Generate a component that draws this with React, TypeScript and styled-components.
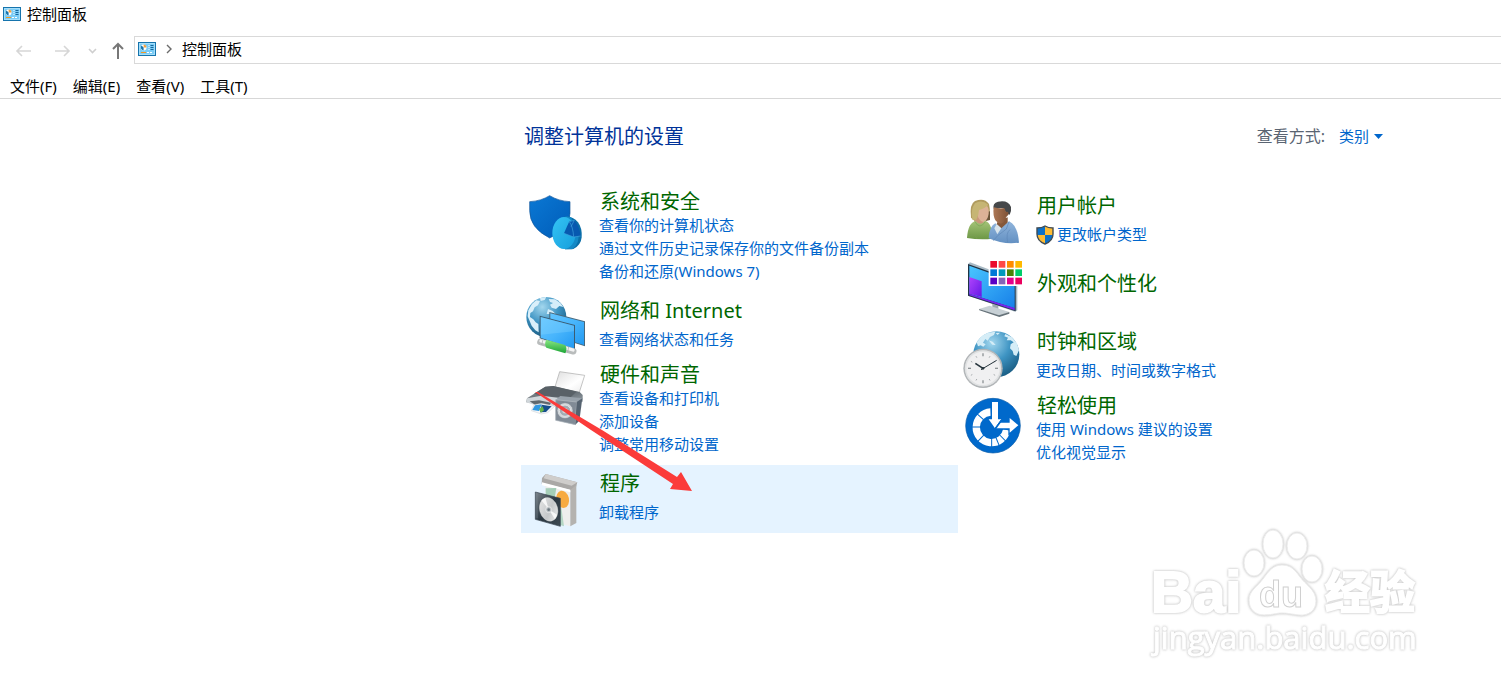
import React from "react";
import styled, { createGlobalStyle } from "styled-components";

const GlobalStyle = createGlobalStyle`
  * { box-sizing: border-box; }
  body {
    margin: 0;
    background: #fff;
    color: #000;
    font-family: "Noto Sans", "Noto Sans CJK SC", sans-serif;
    font-size: 15px;
  }
  button, select { font: inherit; color: inherit; }
`;

const Page = styled.div`
  position: relative;
  min-height: 100vh;
  overflow: hidden;
`;

const TitleBar = styled.header`
  display: flex;
  align-items: center;
  gap: 6px;
  height: 28px;
  padding-left: 3px;
  line-height: 22px;
`;

const NavBar = styled.nav`
  display: flex;
  align-items: center;
  height: 44px;
  padding-left: 14px;
`;

const NavButton = styled.button<{ $width: number }>`
  display: flex;
  align-items: center;
  width: ${(p) => p.$width}px;
  height: 28px;
  padding: 0;
  border: 0;
  background: none;
`;

const AddressBar = styled.div`
  display: flex;
  flex: 1;
  align-items: center;
  gap: 10px;
  height: 28px;
  padding: 0 0 2px 3px;
  border: 1px solid #d9d9d9;
  border-right: 0;
`;

const Crumb = styled.button`
  padding: 0;
  border: 0;
  background: none;
  line-height: 22px;
`;

const MenuBar = styled.div`
  display: flex;
  align-items: center;
  height: 27px;
  padding: 2px 2px 0;
  border-bottom: 1px solid #d7d7d7;
`;

const MenuButton = styled.button`
  padding: 0 8px;
  border: 0;
  background: none;
  line-height: 22px;
`;

const Main = styled.main`
  padding: 22px 106px 0 521px;
`;

const Heading = styled.div`
  display: flex;
  align-items: center;
  justify-content: space-between;
  height: 30px;
  margin-bottom: 36px;
  padding: 0 12px 0 3px;
`;

const PageTitle = styled.h1`
  margin: 0;
  padding-top: 2px;
  color: #003399;
  font-size: 20px;
  font-weight: 400;
  line-height: 28px;
`;

const ViewBy = styled.div`
  display: flex;
  align-items: center;
  gap: 14px;
  color: #5a6472;
`;

const ViewLabel = styled.label`
  font-size: 16px;
  line-height: 24px;
`;

const SelectWrap = styled.div`
  display: grid;
  align-items: center;
  color: #0066cc;
  > * { grid-area: 1 / 1; }
  > svg { justify-self: end; pointer-events: none; }
`;

const Select = styled.select`
  appearance: none;
  width: 44px;
  height: 24px;
  padding: 0;
  border: 0;
  background: none;
`;

const Columns = styled.div`
  display: grid;
  grid-template-columns: 1fr 1fr;
  align-items: start;
`;

const Category = styled.section<{ $active?: boolean }>`
  display: grid;
  grid-template-columns: 64px 1fr;
  column-gap: 12px;
  min-height: 68px;
  padding-left: 2px;
  background: ${(p) => (p.$active ? "#e5f3ff" : "transparent")};
`;

const IconBox = styled.div`
  height: 66px;
  padding-top: 2px;
  > svg { display: block; }
`;

type Density = "empty" | "single" | "list";
const topPad = { empty: 16, single: 6, list: 2 };

const Texts = styled.div<{ $density: Density }>`
  display: flex;
  flex-direction: column;
  align-items: flex-start;
  padding-top: ${(p) => topPad[p.$density]}px;
  padding-bottom: ${(p) => (p.$density === "list" ? 9 : 0)}px;
  gap: ${(p) => (p.$density === "single" ? 5 : 0)}px;
`;

const CategoryLink = styled.a`
  padding-left: 1px;
  color: #006600;
  font-size: 20px;
  line-height: 25px;
  text-decoration: none;
`;

const TaskLink = styled.a`
  display: flex;
  align-items: center;
  gap: 3px;
  color: #0066cc;
  line-height: 23px;
  text-decoration: none;
`;

const Arrow = styled.svg`
  position: absolute;
  left: 530px;
  top: 385px;
  pointer-events: none;
`;

const Watermark = styled.svg`
  position: absolute;
  right: 61px;
  top: 520px;
  pointer-events: none;
  filter: drop-shadow(0 0 1px #c8c8c8) drop-shadow(0 0 1px #e4e4e4);
`;

const PanelIcon = () => (
  <svg width="18" height="14" viewBox="0 0 18 14" aria-hidden="true">
    <rect x="0.5" y="0.5" width="17" height="13" fill="#7accf6" stroke="#1674ad" />
    <rect x="1.5" y="1.5" width="15" height="11" fill="none" stroke="#a4defa" />
    <circle cx="5.6" cy="5.5" r="2.9" fill="#fff" />
    <path d="M5.6 5.5V2.6A2.9 2.9 0 0 1 8.5 5.5Z" fill="#f0a040" />
    <path d="M5.6 5.5L3.5 3.4A3 3 0 0 0 5.6 8.4Z" fill="#1674ad" />
    <path d="M10.5 3.5h1M10.5 5.5h1M10.5 7.5h1" stroke="#fff" />
    <path d="M12.5 3.5h3M12.5 5.5h3M12.5 7.5h3" stroke="#17679c" />
    <path d="M3 10.5h5" stroke="#f39a22" />
    <path d="M9 10.5h2M12 10.5h2" stroke="#fff" />
  </svg>
);

const SecurityIcon = () => (
  <svg width="64" height="64" viewBox="24 237 192 192" aria-hidden="true">
    <defs>
      <linearGradient id="sec-a" x1="0" y1="0" x2="1" y2="1">
        <stop offset="0" stopColor="#0a78d4" /><stop offset="1" stopColor="#005cb8" />
      </linearGradient>
      <linearGradient id="sec-b" x1="0" y1="0" x2="1" y2="1">
        <stop offset="0" stopColor="#35c3f5" /><stop offset="1" stopColor="#159fdc" />
      </linearGradient>
    </defs>
    <path d="M44 275Q78 273 104 257Q130 273 165 275V310Q165 358 104 384Q44 354 44 302Z" fill="url(#sec-a)" stroke="#16579a" strokeWidth="2" />
    <path d="M148 320Q174 318 189 337Q202 354 200 382Q198 406 175 417L150 418Z" fill="#0b6fa8" />
    <path d="M150 320Q160 318 168 322L190 366Q196 398 172 418L150 418Z" fill="#1489c6" />
    <ellipse cx="147" cy="369" rx="35" ry="48" fill="url(#sec-b)" />
    <path d="M147 370L163 334L178 331Q192 346 197 378L176 381Z" fill="#0759b0" />
    <path d="M163 335Q174 350 176 381M147 370L176 381L197 378M163 335L178 331L168 350" fill="none" stroke="#3ea1dd" strokeWidth="2" />
  </svg>
);

const Globe = ({ id, cx, cy, r }: { id: string; cx: number; cy: number; r: number }) => (
  <>
    <defs>
      <radialGradient id={id} cx="0.4" cy="0.25" r="0.8">
        <stop offset="0" stopColor="#a3d7ee" />
        <stop offset="0.5" stopColor="#3e94c3" />
        <stop offset="1" stopColor="#17597f" />
      </radialGradient>
    </defs>
    <circle cx={cx} cy={cy} r={r} fill={`url(#${id})`} />
  </>
);

const NetworkIcon = () => (
  <svg width="64" height="64" viewBox="24 27 192 192" aria-hidden="true">
    <defs>
      <linearGradient id="net-s" x1="0" y1="0" x2="1" y2="1">
        <stop offset="0" stopColor="#62c5ff" /><stop offset="0.5" stopColor="#48b5fc" /><stop offset="1" stopColor="#2299f2" />
      </linearGradient>
      <linearGradient id="net-g" x1="0" y1="0" x2="0" y2="1">
        <stop offset="0" stopColor="#8be783" /><stop offset="1" stopColor="#1ba536" />
      </linearGradient>
    </defs>
    <Globe id="net-globe" cx={94} cy={96} r={60} />
    <path d="M40 76L51 57L64 46L75 48L69 61L59 67L54 79L46 84L45 96L55 103L62 112L70 117L71 142L61 136L50 122L38 94Z" fill="#d9effa" />
    <path d="M75 39L94 36L89 45L77 48ZM101 42L120 43L136 54L145 66L133 63L123 72L110 68L105 59L114 54L105 51ZM99 72L113 78L122 87L95 87Z" fill="#d4edf9" />
    <path d="M103 81L210 109V184L103 150Z" fill="#48687c" />
    <path d="M106 85L207 111V180L106 149Z" fill="url(#net-s)" />
    <path d="M74 92L180 120V195L74 160Z" fill="#3b5c73" />
    <path d="M77 96L177 122V191L77 158Z" fill="url(#net-s)" />
    <path d="M77 96L177 122V139L77 149Z" fill="#9cdeff" opacity=".25" />
    <path d="M76 171L175 199" stroke="#b9bcbc" strokeWidth="19" strokeLinecap="round" />
    <path d="M78 168L174 195" stroke="#f3f3f3" strokeWidth="10" strokeLinecap="round" />
    <path d="M94 164L150 180Q158 188 151 205L94 188Q87 176 94 164Z" fill="url(#net-g)" />
    <path d="M161 185L158 202M84 164L80 180" stroke="#a2a7a7" strokeWidth="2" />
  </svg>
);

const PrinterIcon = () => (
  <svg width="64" height="64" viewBox="24 231 192 192" aria-hidden="true">
    <defs>
      <linearGradient id="prn-a" x1="0" y1="0" x2="1" y2="1">
        <stop offset="0" stopColor="#989da1" /><stop offset="0.55" stopColor="#5d666c" /><stop offset="1" stopColor="#99a2aa" />
      </linearGradient>
      <linearGradient id="prn-b" x1="0" y1="0" x2="1" y2="1">
        <stop offset="0" stopColor="#dedede" /><stop offset="0.6" stopColor="#fff" /><stop offset="1" stopColor="#ececec" />
      </linearGradient>
    </defs>
    <path d="M134 260L209 271L193 322L119 309Z" fill="url(#prn-b)" stroke="#a8a8a8" strokeWidth="2" />
    <path d="M91 305L115 303L194 321L203 330V350L91 354L34 352L36 340Z" fill="url(#prn-a)" />
    <path d="M91 305L115 303L184 320L167 337L85 333L57 326Z" fill="#596167" />
    <path d="M36 340L79 332L161 342L128 354L101 374L34 352Z" fill="#d0d6da" />
    <path d="M44 349L72 346L108 353L100 367L83 369L62 361Z" fill="#5f686e" />
    <path d="M57 359L79 355L120 363L98 383L79 387L49 377Z" fill="#f4f6f8" stroke="#aeb4b9" strokeWidth="1" />
    <path d="M60 361L80 358L72 378L52 375Z" fill="#3198e1" />
    <path d="M80 359L110 364L93 381L75 382Z" fill="#164f8c" />
    <path d="M72 373L83 364L87 376L78 383Z" fill="#67b547" />
    <path d="M122 344L136 333L202 340L194 350L181 419L122 406Z" fill="#98a2ab" />
    <path d="M122 344L185 351L181 419L122 406Z" fill="#818b96" stroke="#b5bcc2" strokeWidth="2" />
    <path d="M185 351L202 340L193 407L181 419Z" fill="#566370" />
    <circle cx="150" cy="377" r="24" fill="#d0d5d9" stroke="#77818b" strokeWidth="2" />
    <circle cx="150" cy="377" r="17" fill="#a3acb4" stroke="#e2e4e6" strokeWidth="3" />
    <circle cx="150" cy="377" r="8" fill="#d2d5d7" />
  </svg>
);

const ProgramsIcon = () => (
  <svg width="64" height="64" viewBox="24 111 192 192" aria-hidden="true">
    <defs>
      <linearGradient id="prg-a" x1="0" y1="0" x2="1" y2="1">
        <stop offset="0" stopColor="#e9e9e9" /><stop offset="0.55" stopColor="#c4c7c9" /><stop offset="1" stopColor="#f2f2f2" />
      </linearGradient>
      <linearGradient id="prg-b" x1="0" y1="0" x2="1" y2="1">
        <stop offset="0" stopColor="#7d858c" /><stop offset="0.5" stopColor="#2a3640" /><stop offset="1" stopColor="#3f4b54" />
      </linearGradient>
    </defs>
    <path d="M81 144L92 132L187 157L183 171L166 182L80 161Z" fill="#aaa8a6" />
    <path d="M92 132L187 157L170 167L86 145Z" fill="#cfcdcb" />
    <path d="M91 161L166 180V289L91 270Z" fill="#eeeeed" />
    <path d="M166 180L184 165V279L166 289Z" fill="#b4b2af" />
    <path d="M81 157L166 179V187L81 166Z" fill="#fff" />
    <path d="M92 175L124 174L119 205L92 198Z" fill="#a5ceb8" />
    <path d="M133 190L147 289L91 270Z" fill="#b4d6c4" />
    <ellipse cx="143" cy="208" rx="19" ry="26" transform="rotate(-12 143 208)" fill="#f7aa40" />
    <path d="M61 186L136 205V289L61 268Z" fill="url(#prg-b)" stroke="#36434e" strokeWidth="2" />
    <ellipse cx="101" cy="238" rx="27" ry="36" transform="rotate(-15 101 238)" fill="url(#prg-a)" stroke="#dadddf" />
    <path d="M101 238L79 211L91 203ZM101 238L126 254L120 268Z" fill="#fff" opacity=".8" />
    <circle cx="101" cy="239" r="9" fill="#b8bec2" stroke="#f4f4f4" strokeWidth="2" />
    <circle cx="101" cy="239" r="4" fill="#6b777f" />
    <path d="M66 191V265" stroke="#788790" strokeWidth="2" />
  </svg>
);

const UsersIcon = () => (
  <svg width="64" height="64" viewBox="15 27 192 192" aria-hidden="true">
    <defs>
      <linearGradient id="usr-g" x1="0" y1="0" x2="0" y2="1">
        <stop offset="0" stopColor="#a6c579" /><stop offset="1" stopColor="#6c9744" />
      </linearGradient>
      <linearGradient id="usr-b" x1="0" y1="0" x2="0" y2="1">
        <stop offset="0" stopColor="#91b5dc" /><stop offset="1" stopColor="#6390c2" />
      </linearGradient>
      <linearGradient id="usr-f" x1="0" y1="0" x2="1" y2="0">
        <stop offset="0" stopColor="#ad7856" /><stop offset="1" stopColor="#7f5236" />
      </linearGradient>
    </defs>
    <path d="M48 113Q43 72 60 63Q88 52 102 72Q106 86 104 106Q100 121 90 122L60 124Z" fill="#b09b5e" />
    <path d="M92 96L105 94V120L92 123Z" fill="#6b5538" />
    <path d="M62 108L89 113V131L76 147L57 128Z" fill="#c9987a" />
    <path d="M68 86Q84 84 94 75Q103 84 101 101Q98 122 85 126Q72 122 68 107Z" fill="#dcb296" />
    <path d="M60 70Q80 57 100 74Q92 84 72 90Q71 108 64 119L52 119Q46 88 60 70Z" fill="#c6b574" />
    <path d="M36 174Q39 128 62 123Q76 140 90 122Q111 127 113 176Q75 180 36 174Z" fill="url(#usr-g)" />
    <path d="M38 171Q60 156 66 177M60 125Q74 151 91 125" fill="none" stroke="#7b9e55" strokeWidth="2" />
    <path d="M129 122L158 112L158 139L137 151L123 138Z" fill="#85583a" />
    <path d="M116 86Q112 70 129 65Q160 59 168 81Q170 92 164 104L153 100L146 84Z" fill="#46484a" />
    <path d="M116 82Q134 87 148 84L153 96Q162 93 160 104L153 112Q150 126 141 130Q130 133 121 121Q113 106 116 82Z" fill="url(#usr-f)" />
    <path d="M101 175Q103 138 121 130L139 145L162 124Q188 135 192 188Q147 195 101 175Z" fill="url(#usr-b)" />
    <path d="M125 132L139 145L127 163L118 145Z" fill="#d9e5ec" />
    <path d="M162 125L154 147L127 168L115 182M158 188Q152 158 165 149" fill="none" stroke="#5d86b6" strokeWidth="2" />
  </svg>
);

const swatches = [
  ["#ea0b2d", "#ff4947", "#ff8c00", "#ffb900"],
  ["#0078d7", "#0099bc", "#498205", "#00cc6a"],
  ["#5800c5", "#8764b8", "#e3008c", "#ea005e"],
];

const AppearanceIcon = () => (
  <svg width="64" height="64" viewBox="15 231 192 192" aria-hidden="true">
    <defs>
      <linearGradient id="app-a" x1="0" y1="0" x2="1" y2="1">
        <stop offset="0" stopColor="#4ac6ff" /><stop offset="1" stopColor="#167fe8" />
      </linearGradient>
      <linearGradient id="app-b" x1="0" y1="0" x2="1" y2="1">
        <stop offset="0" stopColor="#b044fc" /><stop offset="1" stopColor="#6418e6" />
      </linearGradient>
    </defs>
    <path d="M112 371L130 376V393H112Z" fill="#9ca8af" />
    <path d="M72 387L104 377L163 396L132 409Z" fill="#c7d0d5" />
    <path d="M72 387L132 406L163 396V401L133 411L73 391Z" fill="#67737a" />
    <path d="M39 252L45 247L187 300V391L180 395L39 347Z" fill="#a9bac5" />
    <path d="M39 252L182 302V394L39 347Z" fill="#203344" />
    <path d="M43 257L179 306V385L43 341Z" fill="url(#app-a)" />
    <path d="M43 291L80 304V351L43 341Z" fill="url(#app-b)" />
    <path d="M43 341L179 384V391L43 346Z" fill="#7527ef" />
    <rect x="101" y="240" width="103" height="78" fill="#fff" />
    {swatches.map((row, y) =>
      row.map((color, x) => (
        <rect key={color} x={106 + x * 25} y={243 + y * 25} width="20" height="20" fill={color} />
      ))
    )}
  </svg>
);

const ClockIcon = () => (
  <svg width="64" height="64" viewBox="15 15 192 192" aria-hidden="true">
    <Globe id="clk-globe" cx={124} cy={103} r={69} />
    <path d="M65 67L81 47L99 38L121 35L117 45L105 51L98 62L91 57L84 68L92 73L85 80L77 76L69 79ZM122 39L135 38L128 45ZM101 61L113 65L122 75L112 74ZM151 42L171 52L186 70L192 91L184 108L176 104L173 93L165 85L167 73L176 67L167 61L155 61L159 53L148 49Z" fill="#d5edf7" />
    <circle cx="84" cy="145" r="59" fill="#b6b9bb" />
    <circle cx="84" cy="145" r="56" fill="#e0e2e3" stroke="#a5a9ac" strokeWidth="2" />
    <circle cx="84" cy="145" r="50" fill="#f0f0f1" />
    {Array.from({ length: 12 }, (_, i) => (
      <path key={i} d={i % 3 ? "M84 103v5" : "M84 100v9"} stroke="#8d9396" strokeWidth={i % 3 ? 2 : 4} transform={`rotate(${i * 30} 84 145)`} />
    ))}
    <path d="M84 145L61 130" stroke="#26343c" strokeWidth="5" />
    <path d="M78 149L125 121" stroke="#26343c" strokeWidth="3" />
    <circle cx="84" cy="145" r="4" fill="#26343c" />
  </svg>
);

const EaseIcon = () => (
  <svg width="64" height="64" viewBox="15 219 192 192" aria-hidden="true">
    <circle cx="114" cy="317" r="82" fill="#0069cb" stroke="#075aa8" strokeWidth="2" />
    <path d="M107 276A46 46 0 1 0 155 330" fill="none" stroke="#fff" strokeWidth="22" />
    {[45, 68, 90, 134, 180, 222].map((angle) => (
      <path key={angle} d="M144 321H172" stroke="#0069cb" strokeWidth="3" transform={`rotate(${angle} 110 321)`} />
    ))}
    <g fill="#fff" stroke="#0069cb" strokeWidth="8" paintOrder="stroke">
      <path d="M120 325L137 308H164V294L190 316L164 338V325Z" />
      <path d="M111 246H129V298H139L120 325L101 298H111Z" />
    </g>
    <path d="M120 325L139 299" stroke="#0069cb" strokeWidth="3" />
  </svg>
);

const UacShield = () => (
  <svg width="18" height="20" viewBox="0 0 18 20" aria-hidden="true">
    <defs>
      <clipPath id="uac-clip"><path d="M1 3Q6 3 9 1Q12 3 17 3V9Q17 16 9 19Q1 16 1 9Z" /></clipPath>
    </defs>
    <g clipPath="url(#uac-clip)">
      <path d="M0 0H9V10H0ZM9 10H18V20H9Z" fill="#0b70c8" />
      <path d="M9 0H18V10H9ZM0 10H9V20H0Z" fill="#fdbb32" />
    </g>
    <path d="M1 3Q6 3 9 1Q12 3 17 3V9Q17 16 9 19Q1 16 1 9Z" fill="none" stroke="#414b52" strokeWidth="1.4" />
  </svg>
);

interface CategoryData {
  title: string;
  icon: React.ReactNode;
  tasks: string[];
  shield?: boolean;
  active?: boolean;
}

const left: CategoryData[] = [
  { title: "系统和安全", icon: <SecurityIcon />, tasks: ["查看你的计算机状态", "通过文件历史记录保存你的文件备份副本", "备份和还原(Windows 7)"] },
  { title: "网络和 Internet", icon: <NetworkIcon />, tasks: ["查看网络状态和任务"] },
  { title: "硬件和声音", icon: <PrinterIcon />, tasks: ["查看设备和打印机", "添加设备", "调整常用移动设置"] },
  { title: "程序", icon: <ProgramsIcon />, tasks: ["卸载程序"], active: true },
];

const right: CategoryData[] = [
  { title: "用户帐户", icon: <UsersIcon />, tasks: ["更改帐户类型"], shield: true },
  { title: "外观和个性化", icon: <AppearanceIcon />, tasks: [] },
  { title: "时钟和区域", icon: <ClockIcon />, tasks: ["更改日期、时间或数字格式"] },
  { title: "轻松使用", icon: <EaseIcon />, tasks: ["使用 Windows 建议的设置", "优化视觉显示"] },
];

const densityOf = (count: number): Density => (count === 0 ? "empty" : count === 1 ? "single" : "list");

const CategoryList = ({ items }: { items: CategoryData[] }) => (
  <div>
    {items.map((item) => (
      <Category key={item.title} $active={item.active}>
        <IconBox>{item.icon}</IconBox>
        <Texts $density={densityOf(item.tasks.length)}>
          <CategoryLink href="#">{item.title}</CategoryLink>
          {item.tasks.map((task) => (
            <TaskLink key={task} href="#">
              {item.shield && <UacShield />}
              {task}
            </TaskLink>
          ))}
        </Texts>
      </Category>
    ))}
  </div>
);

const BaiduWatermark = () => (
  <Watermark width="300" height="150" viewBox="0 0 300 150" aria-hidden="true">
    <g fill="#fff" stroke="#ececec" strokeWidth="1">
      <ellipse cx="114" cy="43" rx="10" ry="13" />
      <ellipse cx="133" cy="24" rx="10" ry="14" />
      <ellipse cx="157" cy="26" rx="10" ry="13" />
      <ellipse cx="172" cy="49" rx="10" ry="13" />
      <path d="M142 45C151 45 155 50 160 57C166 65 176 70 176 81C176 91 168 96 159 95C151 94 147 93 142 93C136 93 132 95 124 95C115 95 109 89 109 80C109 71 117 67 123 59C129 51 133 45 142 45Z" />
      <g fontFamily="Liberation Sans, sans-serif" fontWeight="700">
        <text x="11" y="92" fontSize="58" stroke="#fff" strokeWidth="2">Bai</text>
        <text x="119" y="87" fontSize="36" stroke="#d0d0d0">du</text>
      </g>
      <text x="185" y="89" fontFamily="Noto Sans CJK SC, sans-serif" fontWeight="700" fontSize="45" stroke="#fff" strokeWidth="2">经验</text>
      <text x="13" y="129" fontFamily="Open Sans, sans-serif" fontSize="31" stroke="#fff">jingyan.baidu.com</text>
    </g>
  </Watermark>
);

export default function App() {
  return (
    <Page>
      <GlobalStyle />
      <TitleBar>
        <PanelIcon />
        <span>控制面板</span>
      </TitleBar>
      <NavBar>
        <NavButton $width={40} aria-label="后退">
          <svg width="18" height="14" viewBox="0 0 18 14" fill="none" stroke="#d6d6d6" strokeWidth="1.6"><path d="M17 8H3M8 3L3 8L8 13" /></svg>
        </NavButton>
        <NavButton $width={34} aria-label="前进">
          <svg width="18" height="14" viewBox="0 0 18 14" fill="none" stroke="#d6d6d6" strokeWidth="1.6"><path d="M1 8H15M10 3L15 8L10 13" /></svg>
        </NavButton>
        <NavButton $width={23} aria-label="最近位置">
          <svg width="9" height="8" viewBox="0 0 9 8" fill="none" stroke="#cfcfcf" strokeWidth="1.6"><path d="M1 3L4.5 6.5L8 3" /></svg>
        </NavButton>
        <NavButton $width={23} aria-label="向上">
          <svg width="14" height="18" viewBox="0 0 14 18" fill="none" stroke="#777" strokeWidth="2"><path d="M7 18V3M2 8L7 3L12 8" /></svg>
        </NavButton>
        <AddressBar>
          <PanelIcon />
          <svg width="6" height="10" viewBox="0 0 6 10" fill="none" stroke="#6b6b6b" strokeWidth="1.4"><path d="M1 1L5 5L1 9" /></svg>
          <Crumb>控制面板</Crumb>
        </AddressBar>
      </NavBar>
      <MenuBar>
        {["文件(F)", "编辑(E)", "查看(V)", "工具(T)"].map((label) => (
          <MenuButton key={label}>{label}</MenuButton>
        ))}
      </MenuBar>
      <Main>
        <Heading>
          <PageTitle>调整计算机的设置</PageTitle>
          <ViewBy>
            <ViewLabel htmlFor="view-by">查看方式:</ViewLabel>
            <SelectWrap>
              <Select id="view-by"><option>类别</option></Select>
              <svg width="9" height="5" viewBox="0 0 9 5" aria-hidden="true"><path d="M0 0H9L4.5 5Z" fill="#0066cc" /></svg>
            </SelectWrap>
          </ViewBy>
        </Heading>
        <Columns>
          <CategoryList items={left} />
          <CategoryList items={right} />
        </Columns>
      </Main>
      <Arrow width="170" height="110" viewBox="530 385 170 110" aria-hidden="true">
        <path d="M535 392L538 392L602 430L677 477L681 472L692 491L670 489L673 484L591 430Z" fill="#fb3b3a" />
      </Arrow>
      <BaiduWatermark />
    </Page>
  );
}
